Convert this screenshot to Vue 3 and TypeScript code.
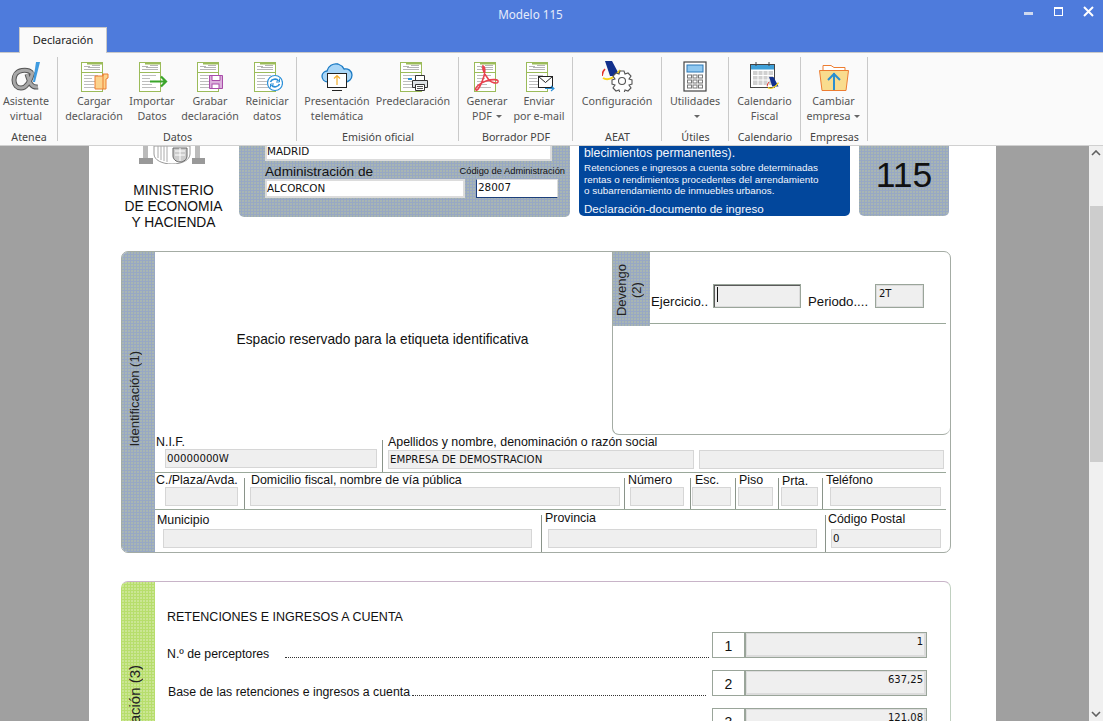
<template>
  <div class="window">
    <svg class="defs" width="0" height="0">
      <symbol id="doc" viewBox="0 0 32 32">
        <rect x="3.5" y="2.5" width="21" height="29" fill="#fff" stroke="#9bbb59" />
        <rect x="9" y="2" width="16" height="2.5" fill="#9bbb59" />
        <path d="M3.5 12.5h21" stroke="#9bbb59" />
        <path d="M6 6.5h6M14 5.5h8M6 9.5h16M10 7.5h12" stroke="#b5b5b5" />
        <path d="M6 15.5h14M6 18.5h8M6 21.5h14M6 24.5h10M6 27.5h14" stroke="#bdbdbd" />
      </symbol>
      <symbol id="aeat" viewBox="0 0 20 24">
        <path d="M3 0h7l8 15-10 0z" fill="#12308c" />
        <path d="M1 17c5 3 12 0 17-8" fill="none" stroke="#f7d417" stroke-width="2" />
        <path d="M3 8c-2 2-3 4-3 7" fill="none" stroke="#e2332b" stroke-width="1.6" />
      </symbol>
    </svg>

    <header class="titlebar">
      <div class="title-row">
        <span class="title">Modelo 115</span>
        <div class="win-btns">
          <span class="win-min"></span>
          <span class="win-max"></span>
          <svg class="win-close" width="11" height="11" viewBox="0 0 11 11">
            <path d="M1 1l9 9M10 1l-9 9" stroke="#fff" stroke-width="2" />
          </svg>
        </div>
      </div>
      <div class="tabs"><div class="tab">Declaración</div></div>
    </header>

    <nav class="ribbon">
      <section
        v-for="g in groups"
        :key="g.label"
        class="group"
        :style="{ width: g.w + 'px', paddingLeft: g.pad + 'px' }"
      >
        <div class="group-btns">
          <div
            v-for="b in g.items"
            :key="b.icon"
            class="rbtn"
            :style="{ width: b.w + 'px' }"
          >
            <svg class="ricon" width="32" height="32" viewBox="0 0 32 32">
              <template v-if="b.icon === 'alpha'">
                <path d="M22 13C19 10 15 10 12 10.500 6 11.500 4 16 4 20c0 5 3 8 7 8 5 0 9-6 12-16M17 14c2 6 3 14 11 13" fill="none" stroke="#555" stroke-width="5" />
                <path d="M22 13C19 10 15 10 12 10.500 6 11.500 4 16 4 20c0 5 3 8 7 8 5 0 9-6 12-16M17 14c2 6 3 14 11 13" fill="none" stroke="#a8a8a8" stroke-width="3" />
                <path d="M26 2h4l-5 20h-2z" fill="#3f9be0" />
              </template>
              <template v-else-if="b.icon === 'cargar'">
                <use href="#doc" width="32" height="32" />
                <path d="M17 16h8v-2h5v4l-2 1v10H17z" fill="#fbd38d" stroke="#ed7d31" />
                <path d="M25 14v15" stroke="#ed7d31" />
              </template>
              <template v-else-if="b.icon === 'importar'">
                <use href="#doc" width="32" height="32" />
                <path d="M14 21.5h15M25 16.5l5 5-5 5" fill="none" stroke="#3aa52a" stroke-width="2.2" />
              </template>
              <template v-else-if="b.icon === 'grabar'">
                <use href="#doc" width="32" height="32" />
                <path d="M15.5 15.5h13v13h-13z" fill="#dcb0dc" stroke="#a84da8" />
                <path d="M18 15.5h8v5h-8z" fill="#fff" stroke="#a84da8" />
                <rect x="18" y="24" width="7" height="4.5" fill="#fff" stroke="#a84da8" />
              </template>
              <template v-else-if="b.icon === 'reiniciar'">
                <use href="#doc" width="32" height="32" />
                <circle cx="24" cy="23" r="7.5" fill="#fff" stroke="#2a8fd8" stroke-width="1.2" />
                <path d="M19.5 22c1-3 6-4 8 -1M28.5 24c-1 3-6 4-8 1" fill="none" stroke="#2a8fd8" stroke-width="1.6" />
                <path d="M28.5 18.5v3.5h-3.5M19.5 27.5v-3.5h3.5" fill="none" stroke="#2a8fd8" />
              </template>
              <template v-else-if="b.icon === 'nube'">
                <path d="M7 22c-4 0-6-3-6-6s3-5 5-5c1-5 6-8 11-7 3 1 5 3 6 5 4-1 8 2 8 6 0 4-3 7-7 7z" fill="#a9d6f7" stroke="#1c7bc4" stroke-width="1.3" />
                <rect x="6.5" y="13.5" width="19" height="14" fill="#fff" stroke="#222" />
                <path d="M16 25v-9M13 18.5l3-3 3 3" fill="none" stroke="#f4ae2e" stroke-width="1.2" />
                <path d="M11 30.5h10" stroke="#222" />
              </template>
              <template v-else-if="b.icon === 'impresora'">
                <use href="#doc" width="32" height="32" />
                <path d="M18.5 15.5h9v5h-9z" fill="#fff" stroke="#333" />
                <path d="M15.5 20.5h15v7h-15z" fill="#dfe3e6" stroke="#333" />
                <path d="M18.5 24.5h9v6h-9z" fill="#fff" stroke="#333" />
                <path d="M20 26.5h6M20 28.5h6" stroke="#555" />
                <path d="M11 19h4" stroke="#2a8fd8" stroke-width="2" />
              </template>
              <template v-else-if="b.icon === 'pdf'">
                <use href="#doc" width="32" height="32" />
                <path d="M12 6c-1 4 2 9 6 14 3 3 8 4 9 2 1-3-6-3-12-1-6 2-12 7-10 9 2 1 6-7 8-14 1-4 1-9-1-10z" fill="none" stroke="#e8424f" stroke-width="1.6" />
              </template>
              <template v-else-if="b.icon === 'email'">
                <use href="#doc" width="32" height="32" />
                <rect x="15.5" y="16.5" width="14" height="11" fill="#fff" stroke="#222" />
                <path d="M15.5 16.5l7 6 7-6" fill="none" stroke="#222" />
                <path d="M22 28.5h9M28 26l3 2.5-3 2.5" fill="none" stroke="#2a8fd8" stroke-width="1.1" />
              </template>
              <template v-else-if="b.icon === 'config'">
                <use href="#aeat" x="1" y="1" width="20" height="24" />
                <g transform="translate(21 21)">
                  <path d="M-2-10h4l1 3 3-1 3 3-2 3 3 1v4l-3 1 2 3-3 3-3-1-1 3h-4l-1-3-3 1-3-3 2-3-3-1v-4l3-1-2-3 3-3 3 1z" fill="#fff" stroke="#555" stroke-width="1.1" />
                  <circle r="3.5" fill="#fff" stroke="#555" stroke-width="1.1" />
                </g>
              </template>
              <template v-else-if="b.icon === 'calc'">
                <rect x="5" y="2" width="22" height="29" fill="#fff" stroke="#444" stroke-width="1.2" />
                <rect x="8" y="5" width="16" height="7" fill="#90c8f0" stroke="#2a78b8" />
                <g fill="#fff" stroke="#777">
                  <rect x="8.5" y="15" width="4" height="3" /><rect x="14" y="15" width="4" height="3" /><rect x="19.5" y="15" width="4" height="3" />
                  <rect x="8.5" y="20" width="4" height="3" /><rect x="14" y="20" width="4" height="3" /><rect x="19.5" y="20" width="4" height="3" />
                  <rect x="8.5" y="25" width="4" height="3" /><rect x="14" y="25" width="4" height="3" /><rect x="19.5" y="25" width="4" height="3" />
                </g>
              </template>
              <template v-else-if="b.icon === 'calendario'">
                <rect x="1.5" y="4.5" width="24" height="23" fill="#fff" stroke="#444" />
                <rect x="2" y="5" width="23" height="4.5" fill="#3fa0d8" />
                <path d="M7 2v4M20 2v4" stroke="#444" />
                <rect x="4" y="11" width="20" height="14" fill="#d0d0d0" />
                <path d="M4 15.5h20M4 20h20M9 11v14M14 11v14M19 11v14" stroke="#fff" />
                <use href="#aeat" x="17" y="17" width="15" height="15" />
              </template>
              <template v-else>
                <path d="M5 11V5.500h8l3 2h11V11" fill="#fff" stroke="#ed7d31" />
                <path d="M1.500 10.500h29l-2.500 20H4z" fill="#f9dc8e" stroke="#ed7d31" />
                <path d="M16 30V13M10 20l6-6 6 6" fill="none" stroke="#2a8fd0" stroke-width="2" />
              </template>
            </svg>
            <span class="rline">{{ b.l1 }}</span>
            <span class="rline">{{ b.l2 }}<i v-if="b.caret" class="caret"></i></span>
          </div>
        </div>
        <div class="group-label" :style="{ marginLeft: -g.pad + 'px' }">{{ g.label }}</div>
      </section>
    </nav>

    <main class="doc">
      <div class="page">
        <div class="head">
          <div class="ministry">
            <svg width="66" height="18" viewBox="0 0 66 18">
              <path d="M4 0h5v12H4zM56 0h5v12h-5z" fill="#bbb" />
              <path d="M0 12h14v6H0zM53 12h13v6H53z" fill="#999" />
              <path d="M15 0h36v8c0 6-8 10-18 10S15 14 15 8z" fill="#fff" stroke="#999" />
              <path d="M19 0v12M22 0v14M25 0v15M28 0v16" stroke="#aaa" />
              <path d="M34 2h14v8c0 3-3 6-7 6s-7-3-7-6z" fill="#ccc" stroke="#666" />
              <path d="M36 5h10M36 9h10M41 2v13" stroke="#fff" />
            </svg>
            <div class="ministry-name">MINISTERIO<br />DE ECONOMIA<br />Y HACIENDA</div>
          </div>
          <div class="admin dither">
            <div class="admin-input admin-madrid">MADRID</div>
            <div class="admin-labels">
              <span class="admin-label">Administración de</span>
              <span class="admin-code">Código de Administración</span>
            </div>
            <div class="admin-fields">
              <div class="admin-input admin-alcorcon">ALCORCON</div>
              <div class="admin-input admin-num">28007</div>
            </div>
          </div>
          <div class="title-box">
            <div class="tb-big">blecimientos permanentes).</div>
            <div class="tb-small">Retenciones e ingresos a cuenta sobre determinadas<br />rentas o rendimientos procedentes del arrendamiento<br />o subarrendamiento de inmuebles urbanos.</div>
            <div class="tb-foot">Declaración-documento de ingreso</div>
          </div>
          <div class="model dither">115</div>
        </div>

        <section class="form-sec sec-id">
          <div class="side dither side-id"><span class="vtext">Identificación (1)</span></div>
          <div class="sec-body">
            <div class="upper">
              <div class="reserved">Espacio reservado para la etiqueta identificativa</div>
              <div class="devengo">
                <div class="dev-top">
                  <div class="dev-side dither"><span class="vtext">Devengo<br />(2)</span></div>
                  <div class="dev-fields">
                    <span class="dev-label dev-eje">Ejercicio..</span>
                    <div class="dev-input dev-year"><i class="cursor"></i></div>
                    <span class="dev-label dev-per">Periodo....</span>
                    <div class="dev-input dev-term">2T</div>
                  </div>
                </div>
              </div>
            </div>
            <div v-for="(row, i) in idRows" :key="i" class="id-row" :style="{ height: row.h + 'px' }">
              <div
                v-for="c in row.cells"
                :key="c.label"
                class="id-cell"
                :class="{ first: c.first }"
                :style="{ width: c.w + 'px' }"
              >
                <div class="id-slot" :style="{ height: c.slot + 'px', paddingLeft: c.lx + 'px', paddingTop: c.lt + 'px' }">{{ c.label }}</div>
                <div class="id-fields">
                  <div
                    v-for="f in c.fields"
                    :key="f.x"
                    class="id-input"
                    :style="{ marginLeft: f.x + 'px', width: f.w + 'px' }"
                  >{{ f.v }}</div>
                </div>
              </div>
            </div>
          </div>
        </section>

        <section class="form-sec sec-liq">
          <div class="side side-liq"><span class="vtext">Liquidación (3)</span></div>
          <div class="liq-body">
            <div class="liq-title">RETENCIONES E INGRESOS A CUENTA</div>
            <div v-for="r in liqRows" :key="r.n" class="liq-row">
              <span class="liq-label" :style="{ marginLeft: r.lx + 'px' }">{{ r.label }}</span>
              <span class="liq-dots" :style="{ marginLeft: r.dx + 'px', marginRight: r.gap + 'px' }"></span>
              <span class="liq-num">{{ r.n }}</span>
              <span class="liq-val">{{ r.v }}</span>
            </div>
          </div>
        </section>
      </div>

      <aside class="scrollbar">
        <svg class="chev" width="10" height="6" viewBox="0 0 10 6"><path d="M1 5l4-4 4 4" fill="none" stroke="#606060" stroke-width="1.600" /></svg>
        <div class="thumb"></div>
        <svg class="chev" width="10" height="6" viewBox="0 0 10 6"><path d="M1 1l4 4 4-4" fill="none" stroke="#606060" stroke-width="1.600" /></svg>
      </aside>
    </main>
  </div>
</template>

<script setup lang="ts">
interface RibbonButton {
  icon: string;
  l1: string;
  l2: string;
  w: number;
  caret?: boolean;
}

interface RibbonGroup {
  label: string;
  w: number;
  pad: number;
  items: RibbonButton[];
}

interface IdField {
  x: number;
  w: number;
  v?: string;
}

interface IdCell {
  label: string;
  w: number;
  lx: number;
  lt: number;
  slot: number;
  first?: boolean;
  fields: IdField[];
}

const groups: RibbonGroup[] = [
  { label: "Atenea", w: 58, pad: 0, items: [{ icon: "alpha", l1: "Asistente", l2: "virtual", w: 52 }] },
  {
    label: "Datos",
    w: 239,
    pad: 7,
    items: [
      { icon: "cargar", l1: "Cargar", l2: "declaración", w: 58 },
      { icon: "importar", l1: "Importar", l2: "Datos", w: 58 },
      { icon: "grabar", l1: "Grabar", l2: "declaración", w: 58 },
      { icon: "reiniciar", l1: "Reiniciar", l2: "datos", w: 56 },
    ],
  },
  {
    label: "Emisión oficial",
    w: 162,
    pad: 4,
    items: [
      { icon: "nube", l1: "Presentación", l2: "telemática", w: 72 },
      { icon: "impresora", l1: "Predeclaración", l2: "", w: 80 },
    ],
  },
  {
    label: "Borrador PDF",
    w: 114,
    pad: 2,
    items: [
      { icon: "pdf", l1: "Generar", l2: "PDF", w: 52, caret: true },
      { icon: "email", l1: "Enviar", l2: "por e-mail", w: 52 },
    ],
  },
  { label: "AEAT", w: 89, pad: 0, items: [{ icon: "config", l1: "Configuración", l2: "", w: 88 }] },
  { label: "Útiles", w: 67, pad: 0, items: [{ icon: "calc", l1: "Utilidades", l2: "", w: 66, caret: true }] },
  { label: "Calendario", w: 72, pad: 0, items: [{ icon: "calendario", l1: "Calendario", l2: "Fiscal", w: 71 }] },
  { label: "Empresas", w: 67, pad: 0, items: [{ icon: "folder", l1: "Cambiar", l2: "empresa", w: 65, caret: true }] },
];

const idRows: { h: number; cells: IdCell[] }[] = [
  {
    h: 37,
    cells: [
      { label: "N.I.F.", w: 227, lx: 1, lt: 0, slot: 14, first: true, fields: [{ x: 10, w: 212, v: "00000000W" }] },
      {
        label: "Apellidos y nombre, denominación o razón social",
        w: 568,
        lx: 6,
        lt: 0,
        slot: 15,
        fields: [
          { x: 6, w: 306, v: "EMPRESA DE DEMOSTRACION" },
          { x: 5, w: 245 },
        ],
      },
    ],
  },
  {
    h: 37,
    cells: [
      { label: "C./Plaza/Avda.", w: 89, lx: 1, lt: 0, slot: 14, first: true, fields: [{ x: 10, w: 73 }] },
      { label: "Domicilio fiscal, nombre de vía pública", w: 380, lx: 7, lt: 0, slot: 14, fields: [{ x: 6, w: 370 }] },
      { label: "Número", w: 66, lx: 4, lt: 0, slot: 14, fields: [{ x: 6, w: 54 }] },
      { label: "Esc.", w: 45, lx: 5, lt: 0, slot: 14, fields: [{ x: 2, w: 39 }] },
      { label: "Piso", w: 43, lx: 4, lt: 0, slot: 14, fields: [{ x: 3, w: 35 }] },
      { label: "Prta.", w: 44, lx: 4, lt: 1, slot: 14, fields: [{ x: 3, w: 37 }] },
      { label: "Teléfono", w: 128, lx: 4, lt: 0, slot: 14, fields: [{ x: 8, w: 111 }] },
    ],
  },
  {
    h: 43,
    cells: [
      { label: "Municipio", w: 386, lx: 2, lt: 3, slot: 19, first: true, fields: [{ x: 8, w: 369 }] },
      { label: "Provincia", w: 284, lx: 4, lt: 1, slot: 19, fields: [{ x: 7, w: 269 }] },
      { label: "Código Postal", w: 125, lx: 3, lt: 2, slot: 19, fields: [{ x: 6, w: 110, v: "0" }] },
    ],
  },
];

const liqRows = [
  { n: 1, label: "N.º de perceptores", v: "1", lx: 0, dx: 16, gap: 3 },
  { n: 2, label: "Base de las retenciones e ingresos a cuenta", v: "637,25", lx: 1, dx: 2, gap: 6 },
  { n: 3, label: "", v: "121,08", lx: 0, dx: 0, gap: 3 },
];
</script>

<style>
html,
body {
  margin: 0;
  overflow: hidden;
}
</style>

<style scoped>
.window {
  width: 1103px;
  height: 721px;
  display: flex;
  flex-direction: column;
  overflow: hidden;
  font-family: "Liberation Sans", Arial, sans-serif;
  background: #a0a0a0;
}

.defs {
  position: absolute;
}

.titlebar {
  height: 52px;
  flex: none;
  background: #4e7bdc;
  display: flex;
  flex-direction: column;
  border-bottom: 1px solid #c9c9c9;
}

.title-row {
  height: 27px;
  display: flex;
  justify-content: center;
  position: relative;
}

.title {
  font: 11.7px/28px "Noto Sans", sans-serif;
  color: #e6ecfb;
  margin-left: -42px;
}

.win-btns {
  position: absolute;
  right: 9px;
  top: 6px;
  display: flex;
  align-items: flex-start;
}

.win-min {
  width: 9px;
  height: 3px;
  margin-top: 6px;
  background: #cfd9ef;
}

.win-max {
  width: 7px;
  height: 6px;
  margin: 1px 20px 0 21px;
  border: 1px solid #fff;
  border-top-width: 2px;
}

.tabs {
  padding-left: 19px;
  flex: 1;
  display: flex;
}

.tab {
  width: 86px;
  margin-bottom: -1px;
  background: #fafafa;
  border: 1px solid #c9c9c9;
  border-bottom: none;
  font: 11px/24px "Noto Sans", sans-serif;
  color: #222;
  text-align: center;
}

.ribbon {
  height: 92px;
  flex: none;
  display: flex;
  background: #fafafa;
  border-bottom: 1px solid #d0d0d0;
}

.group {
  position: relative;
  box-sizing: border-box;
  flex: none;
  display: flex;
  flex-direction: column;
}

.group::after {
  content: "";
  position: absolute;
  right: 0;
  top: 4px;
  bottom: 4px;
  width: 1px;
  background: #c9c9c9;
}

.group-btns {
  display: flex;
  flex: 1;
}

.rbtn {
  display: flex;
  flex-direction: column;
  align-items: center;
  padding-top: 7px;
  font: 10.7px/15px "Noto Sans", sans-serif;
  color: #555;
  white-space: nowrap;
}

.ricon {
  display: block;
  flex: none;
  margin-bottom: 2px;
}

.rline {
  height: 15px;
  display: flex;
  align-items: center;
}

.caret {
  width: 0;
  height: 0;
  margin-left: 4px;
  border-left: 3px solid transparent;
  border-right: 3px solid transparent;
  border-top: 3px solid #666;
}

.group-label {
  height: 17px;
  font: 10.7px/19px "Noto Sans", sans-serif;
  color: #444;
  text-align: center;
}

.doc {
  flex: 1;
  min-height: 0;
  display: flex;
  padding-left: 89px;
}

.page {
  width: 907px;
  flex: none;
  background: #fff;
  overflow: hidden;
  color: #111;
}

.dither {
  background-color: #98a8c4;
  background-image: radial-gradient(circle at 1px 1px, #a9b6b2 0.7px, transparent 0.9px);
  background-size: 3px 3px;
}

.head {
  height: 105px;
  display: flex;
  align-items: flex-start;
}

.ministry {
  width: 150px;
  flex: none;
  display: flex;
  flex-direction: column;
  align-items: center;
}

.ministry svg {
  display: block;
  margin-left: 16px;
}

.ministry-name {
  margin: 19px 0 0 19px;
  font-size: 13.8px;
  line-height: 16px;
  text-align: center;
  white-space: nowrap;
}

.admin {
  width: 331px;
  height: 71px;
  flex: none;
  box-sizing: border-box;
  padding-left: 26px;
  border-radius: 0 0 5px 5px;
}

.admin-input {
  box-sizing: border-box;
  background: #fff;
  border: 2px solid #dcdcdc;
  font: 10.4px/14px "DejaVu Sans", sans-serif;
  color: #111;
}

.admin-madrid {
  width: 287px;
  height: 15px;
  border-top: none;
  line-height: 11px;
}

.admin-labels {
  height: 18px;
  display: flex;
  justify-content: space-between;
  align-items: flex-end;
  width: 300px;
  white-space: nowrap;
}

.admin-label {
  font-size: 13.6px;
  line-height: 14px;
}

.admin-code {
  font-size: 9.3px;
  line-height: 11px;
  margin-bottom: 2px;
}

.admin-fields {
  display: flex;
}

.admin-alcorcon {
  width: 200px;
  height: 19px;
}

.admin-num {
  width: 82px;
  height: 19px;
  margin-left: 11px;
  padding-left: 1px;
  border: 1px solid #dcdcdc;
  border-left: 1px solid #1c3f7c;
  border-bottom: 1px solid #1c3f7c;
}

.title-box {
  width: 271px;
  height: 70px;
  flex: none;
  margin-left: 9px;
  box-sizing: border-box;
  padding-left: 5px;
  background: #02479c;
  border-radius: 0 0 5px 5px;
  color: #f2f6fc;
  white-space: nowrap;
}

.tb-big {
  font-size: 12.3px;
  line-height: 14px;
}

.tb-small {
  margin-top: 2px;
  font-size: 9.9px;
  line-height: 11.5px;
}

.tb-foot {
  margin-top: 5px;
  font-size: 11.6px;
  line-height: 14px;
}

.model {
  width: 90px;
  height: 70px;
  flex: none;
  margin-left: 9px;
  border-radius: 0 0 5px 5px;
  font-size: 35.5px;
  line-height: 58px;
  text-align: center;
}

.form-sec {
  width: 830px;
  margin-left: 32px;
  box-sizing: border-box;
  display: flex;
  border: 1px solid #a4aca4;
  border-radius: 7px;
  overflow: hidden;
}

.sec-id {
  height: 302px;
}

.sec-liq {
  margin-top: 28px;
  height: 300px;
  border-color: #c8b4c8 #c0d0c0 #c0d0c0 #b7dc6c;
}

.side {
  width: 33px;
  flex: none;
  display: flex;
  justify-content: center;
}

.side-id {
  padding-top: 99px;
  box-sizing: border-box;
}

.side-liq {
  padding-top: 83px;
  box-sizing: border-box;
  background-color: #b7de6c;
  background-image: radial-gradient(circle at 1px 1px, #cce695 0.7px, transparent 0.9px);
  background-size: 3px 3px;
}

.vtext {
  writing-mode: vertical-rl;
  transform: rotate(180deg);
  font-size: 13px;
  line-height: 16px;
  margin-right: 8px;
  white-space: nowrap;
  text-align: center;
  color: #222;
  align-self: flex-start;
}

.side-liq .vtext {
  font-size: 15px;
}

.sec-body {
  flex: 1;
  min-width: 0;
}

.upper {
  height: 183px;
  display: flex;
}

.reserved {
  width: 457px;
  flex: none;
  padding: 80px 2px 0 0;
  box-sizing: border-box;
  font-size: 13.75px;
  line-height: 16px;
  text-align: center;
}

.devengo {
  flex: 1;
  box-sizing: border-box;
  border-left: 1px solid #a4aca4;
  border-bottom: 1px solid #a4aca4;
  border-radius: 0 0 7px 7px;
}

.dev-top {
  display: flex;
  height: 74px;
}

.dev-side {
  width: 37px;
  flex: none;
  display: flex;
  justify-content: center;
  padding-top: 12px;
  box-sizing: border-box;
}

.dev-side .vtext {
  font-size: 13px;
  line-height: 15px;
  margin-right: 6px;
}

.dev-fields {
  flex: 1;
  height: 72px;
  margin-right: 4px;
  box-sizing: border-box;
  padding-top: 32px;
  display: flex;
  align-items: flex-start;
  border-bottom: 1px solid #9aa89a;
}

.dev-label {
  font-size: 13.2px;
  line-height: 16px;
  margin-top: 10px;
  white-space: nowrap;
  flex: none;
}

.dev-eje {
  width: 57px;
  margin-left: 1px;
}

.dev-per {
  width: 59px;
  margin-left: 7px;
}

.dev-input {
  height: 24px;
  flex: none;
  box-sizing: border-box;
  background: #efefef;
  border: 1px solid #9aa59a;
  font: 10px/14px "DejaVu Sans", sans-serif;
}

.dev-year {
  width: 88px;
  margin-left: 5px;
  padding: 2px 0 0 2px;
  box-shadow: inset 1px 1px 0 #5a5a5a, inset -1px -1px 0 #dcdcdc;
}

.cursor {
  display: block;
  width: 1px;
  height: 15px;
  background: #111;
  margin-left: 1px;
}

.dev-term {
  width: 49px;
  margin-left: 8px;
  padding: 2px 0 0 3px;
  box-shadow: inset 0 0 0 1px #dcdcdc;
}

.id-row {
  display: flex;
  box-sizing: border-box;
  border-top: 1px solid #9aa89a;
  width: 791px;
}

.upper + .id-row {
  border-top: none;
}

.id-cell {
  position: relative;
  flex: none;
  box-sizing: border-box;
}

.id-cell:not(.first)::before {
  content: "";
  position: absolute;
  left: 0;
  top: 5px;
  bottom: 0;
  width: 1px;
  background: #8a948a;
}

.id-slot {
  box-sizing: border-box;
  font-size: 12.4px;
  line-height: 14px;
  white-space: nowrap;
}

.id-fields {
  display: flex;
}

.id-input {
  height: 19px;
  flex: none;
  box-sizing: border-box;
  background: #efefef;
  border: 1px solid #d6d6d6;
  padding-left: 1px;
  font: 10.2px/17px "DejaVu Sans", sans-serif;
  color: #111;
  overflow: hidden;
  white-space: nowrap;
}

.liq-body {
  flex: 1;
  padding: 27px 23px 0 12px;
  min-width: 0;
}

.liq-title {
  font-size: 12.5px;
  line-height: 16px;
  height: 23px;
}

.liq-row {
  display: flex;
  height: 26px;
  margin-bottom: 12px;
  align-items: stretch;
  font-size: 12.3px;
}

.liq-label {
  white-space: nowrap;
  line-height: 16px;
  padding-top: 14px;
  flex: none;
}

.liq-dots {
  flex: 1;
  height: 20px;
  border-bottom: 1px dotted #333;
  margin-top: 5px;
  align-self: flex-start;
}

.liq-num {
  width: 33px;
  flex: none;
  box-sizing: border-box;
  border: 1px solid #9aa59a;
  font-size: 14px;
  line-height: 26px;
  text-align: center;
  background: #fff;
}

.liq-val {
  width: 182px;
  flex: none;
  box-sizing: border-box;
  background: #efefef;
  border: 1px solid #9aa59a;
  box-shadow: inset 1px 1px 0 #dcdcdc, inset -2px -2px 0 #dcdcdc;
  padding-right: 3px;
  font: 10px/18px "DejaVu Sans", sans-serif;
  text-align: right;
}

.scrollbar {
  width: 14px;
  margin-left: 93px;
  flex: none;
  background: #f0f0f0;
  display: flex;
  flex-direction: column;
  align-items: center;
}

.chev {
  display: block;
  flex: none;
  margin: 4px 0;
}

.thumb {
  width: 13px;
  flex: none;
  height: 256px;
  margin: 46px 0 auto 1px;
  background: #cdcdcd;
}
</style>
